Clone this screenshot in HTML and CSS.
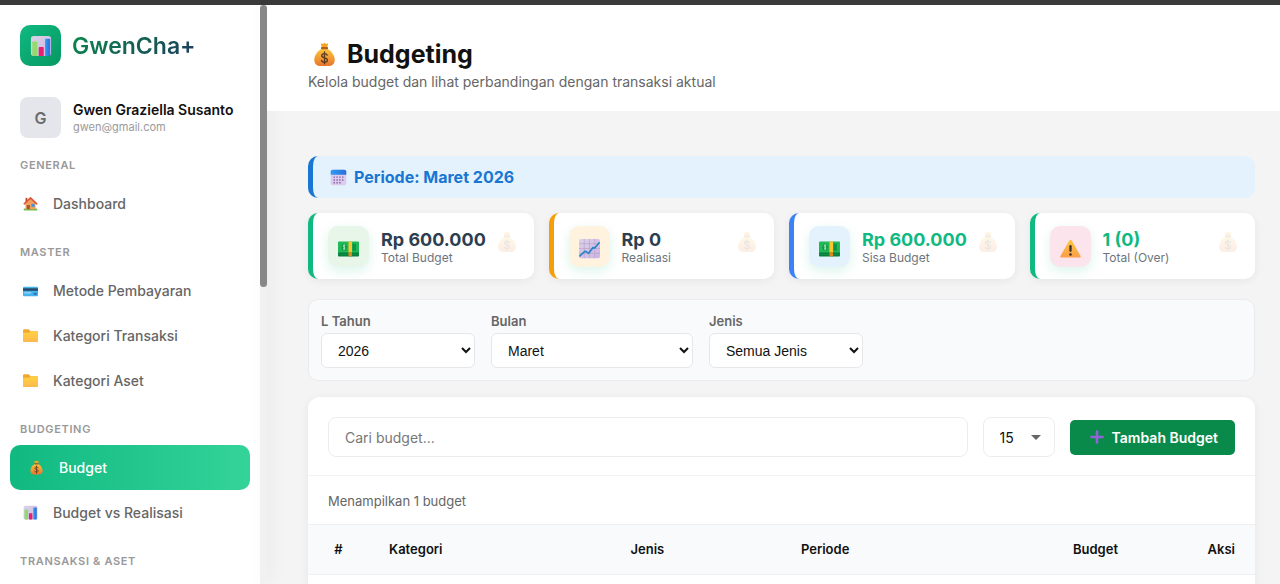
FILE: index.html
```html
<!DOCTYPE html>
<html lang="id">
  <head>
    <meta charset="UTF-8" />
    <meta name="viewport" content="width=device-width, initial-scale=1.0" />
    <title>Budgeting - GwenCha+</title>
    <link rel="stylesheet" href="styles.css" />
  </head>

  <body>
    <!-- Shared icons -->
    <svg class="sprite" aria-hidden="true">
      <defs>
        <linearGradient id="gBag" x1="0" y1="0" x2="0" y2="1">
          <stop offset="0" stop-color="#fbc63a" />
          <stop offset="1" stop-color="#e8762d" />
        </linearGradient>
        <linearGradient id="gFolder" x1="0" y1="0" x2="0" y2="1">
          <stop offset="0" stop-color="#ffd23f" />
          <stop offset="1" stop-color="#fdb851" />
        </linearGradient>
        <linearGradient id="gPaper" x1="0" y1="0" x2="1" y2="1">
          <stop offset="0" stop-color="#d9d3e6" />
          <stop offset="1" stop-color="#cfb4e4" />
        </linearGradient>
        <linearGradient id="gBlue" x1="0" y1="0" x2="1" y2="0">
          <stop offset="0" stop-color="#2f9cf2" />
          <stop offset="1" stop-color="#2a6fdc" />
        </linearGradient>
        <linearGradient id="gWarn" x1="0" y1="0" x2="0" y2="1">
          <stop offset="0" stop-color="#fdc53c" />
          <stop offset="1" stop-color="#fb9f4b" />
        </linearGradient>
      </defs>
      <symbol id="bag" viewBox="0 0 24 24">
        <path fill="#f5a623" d="M8.4 1.2l2 .8L12 .8l1.600 1.200 2-.8-1 4.300h-5.200z" />
        <path fill="url(#gBag)" d="M9.300 6.500h5.400c4 2.300 7.100 6.300 7.100 10.500 0 4.300-2.600 6-6.200 6H8.400c-3.600 0-6.200-1.700-6.200-6 0-4.200 3.100-8.200 7.100-10.500z" />
        <rect x="8.500" y="4.800" width="7" height="2.200" rx="1.100" fill="#a8612b" />
        <path fill="none" stroke="#5d3a26" stroke-width="1.300" stroke-linecap="round" d="M14.600 12.600c-.4-1-1.400-1.500-2.600-1.500-1.500 0-2.600.8-2.600 2 0 2.900 5.400 1.300 5.400 4.200 0 1.200-1.200 2.100-2.800 2.100-1.400 0-2.500-.6-2.900-1.700M12 9.600v11.300" />
      </symbol>
      <symbol id="chart" viewBox="0 0 24 24">
        <rect x="1" y="1" width="22" height="22" rx="3" fill="url(#gPaper)" />
        <rect x="2.500" y="7" width="5.500" height="16" rx="1" fill="#8fdc6b" />
        <rect x="9.500" y="13" width="5.500" height="10" rx="1" fill="#e0246f" />
        <rect x="16.500" y="4" width="5.500" height="19" rx="1" fill="url(#gBlue)" />
      </symbol>
      <symbol id="house" viewBox="0 0 24 24">
        <rect x="1" y="20" width="22" height="3" rx="1.500" fill="#6cbb46" />
        <rect x="4" y="3" width="3" height="7" fill="#b4533a" />
        <path fill="#f2a15c" d="M4 11l8-7 8 7v10H4z" />
        <path fill="#9a5a3c" d="M6 14.500h5V21H6z" />
        <path fill="#3f97e0" d="M13.500 12.500h5v5h-5z" />
        <path fill="none" stroke="#e0533d" stroke-width="2.600" stroke-linecap="round" stroke-linejoin="round" d="M2 12.500L12 3l10 9.500" />
      </symbol>
      <symbol id="card" viewBox="0 0 24 24">
        <rect x="0" y="6" width="24" height="15" rx="1.500" fill="#46b3ec" />
        <rect x="0" y="8.500" width="24" height="4" fill="#25496b" />
        <rect x="2" y="14.500" width="11" height="2.500" fill="#8fd2f5" />
        <rect x="17" y="15.500" width="5" height="3.500" rx="1" fill="#2778c9" />
      </symbol>
      <symbol id="folder" viewBox="0 0 24 24">
        <path fill="#f3a72c" d="M0 4.500C0 3 .8 2 2.300 2h6c.8 0 1.300.3 1.800.8L12 5h10c1.300 0 2 .7 2 2v8H0z" />
        <path fill="url(#gFolder)" d="M0 7.500h9.500l2.500-2h10c1.300 0 2 .7 2 2V21c0 1-.7 1.500-1.800 1.500H1.800C.7 22.500 0 22 0 21z" />
      </symbol>
      <symbol id="calendar" viewBox="0 0 24 24">
        <rect x="1" y="1" width="22" height="22" rx="3" fill="#dccbed" />
        <path fill="url(#gBlue)" d="M1 8V4c0-2 1-3 3-3h16c2 0 3 1 3 3v4z" />
        <path fill="none" stroke="#8468a5" stroke-width="2" stroke-dasharray="2 2" d="M5 11.500h14M5 15.500h14M5 19.500h12" />
      </symbol>
      <symbol id="money" viewBox="0 0 24 24">
        <rect x="0" y="4" width="24" height="13" rx="1" fill="#1fb956" />
        <path fill="#087c3c" d="M0 16.500h24V20c0 .6-.4 1-1 1H1c-.6 0-1-.4-1-1z" />
        <path stroke="#12994a" stroke-width=".8" d="M0 18.700h24" />
        <ellipse cx="7" cy="10.500" rx="3" ry="4" fill="#0e9446" />
        <path fill="none" stroke="#b8edbd" stroke-width="1" d="M8.300 8.700c-2-1.200-3.400 1-1.400 1.700 2.200.8.800 2.900-1.200 1.800M7 7v7" />
        <path fill="#0e9446" d="M16.500 6.500h4v8h-4z" />
        <path fill="#fbc52f" d="M12 4h4v12.500h-4z" />
        <path fill="#d98a1b" d="M12 16.500h4V21h-4z" />
      </symbol>
      <symbol id="trend" viewBox="0 0 24 24">
        <rect x="0" y="1" width="24" height="22" rx="2" fill="url(#gPaper)" />
        <path fill="none" stroke="#b79cc9" stroke-width=".7" d="M6 1v22M12 1v22M18 1v22M0 6.500h24M0 12h24M0 17.500h24" />
        <path fill="none" stroke="#2a86c8" stroke-width="2" stroke-linejoin="round" stroke-linecap="round" d="M1 20.500l6-5.500 4 2.500 5-6.500 2 .5 5-6" />
      </symbol>
      <symbol id="warning" viewBox="0 0 24 24">
        <path fill="url(#gWarn)" d="M10.800 2.700c.6-1 1.800-1 2.400 0l10.300 17.800c.5.900 0 1.800-1 1.800h-21c-1 0-1.500-.9-1-1.800z" />
        <rect x="10.700" y="8" width="2.600" height="8" rx="1.300" fill="#3a322c" />
        <circle cx="12" cy="18.800" r="1.500" fill="#3a322c" />
      </symbol>
      <symbol id="plus" viewBox="0 0 24 24">
        <path stroke="#9163d6" stroke-width="4.400" stroke-linecap="round" d="M12 2.500v19M2.500 12h19" />
      </symbol>
    </svg>

    <div class="topbar"></div>
    <div class="app">
      <aside class="sidebar">
        <div class="brand">
          <div class="brand-logo"><svg><use href="#chart" /></svg></div>
          <span class="brand-name">GwenCha+</span>
        </div>

        <div class="profile">
          <div class="avatar">G</div>
          <div>
            <div class="profile-name">Gwen Graziella Susanto</div>
            <div class="profile-email">gwen@gmail.com</div>
          </div>
        </div>

        <nav>
          <div class="nav-title">General</div>
          <a class="nav-link" href="#"><svg><use href="#house" /></svg>Dashboard</a>

          <div class="nav-title">Master</div>
          <a class="nav-link" href="#"><svg><use href="#card" /></svg>Metode Pembayaran</a>
          <a class="nav-link" href="#"><svg><use href="#folder" /></svg>Kategori Transaksi</a>
          <a class="nav-link" href="#"><svg><use href="#folder" /></svg>Kategori Aset</a>

          <div class="nav-title">Budgeting</div>
          <a class="nav-link active" href="#"><svg><use href="#bag" /></svg>Budget</a>
          <a class="nav-link" href="#"><svg><use href="#chart" /></svg>Budget vs Realisasi</a>

          <div class="nav-title">Transaksi &amp; Aset</div>
        </nav>
      </aside>
      <div class="scroll-track"><div class="scroll-thumb"></div></div>

      <main class="main">
        <header class="page-header">
          <h1><svg><use href="#bag" /></svg>Budgeting</h1>
          <p>Kelola budget dan lihat perbandingan dengan transaksi aktual</p>
        </header>

        <div class="content">
          <div class="period"><svg><use href="#calendar" /></svg>Periode: Maret 2026</div>

          <section class="stats">
            <div class="stat green">
              <div class="stat-icon"><svg><use href="#money" /></svg></div>
              <div class="stat-text">
                <div class="stat-value">Rp 600.000</div>
                <div class="stat-label">Total Budget</div>
              </div>
              <svg class="stat-mark"><use href="#bag" /></svg>
            </div>
            <div class="stat orange">
              <div class="stat-icon"><svg><use href="#trend" /></svg></div>
              <div class="stat-text">
                <div class="stat-value">Rp 0</div>
                <div class="stat-label">Realisasi</div>
              </div>
              <svg class="stat-mark"><use href="#bag" /></svg>
            </div>
            <div class="stat blue">
              <div class="stat-icon"><svg><use href="#money" /></svg></div>
              <div class="stat-text">
                <div class="stat-value positive">Rp 600.000</div>
                <div class="stat-label">Sisa Budget</div>
              </div>
              <svg class="stat-mark"><use href="#bag" /></svg>
            </div>
            <div class="stat pink">
              <div class="stat-icon"><svg><use href="#warning" /></svg></div>
              <div class="stat-text">
                <div class="stat-value positive">1 (0)</div>
                <div class="stat-label">Total (Over)</div>
              </div>
              <svg class="stat-mark"><use href="#bag" /></svg>
            </div>
          </section>

          <form class="filters">
            <div class="field">
              <label for="tahun">L Tahun</label>
              <select id="tahun">
                <option>2026</option>
              </select>
            </div>
            <div class="field field-wide">
              <label for="bulan">Bulan</label>
              <select id="bulan">
                <option>Maret</option>
              </select>
            </div>
            <div class="field">
              <label for="jenis">Jenis</label>
              <select id="jenis">
                <option>Semua Jenis</option>
              </select>
            </div>
          </form>

          <section class="panel">
            <div class="toolbar">
              <input class="search" type="text" placeholder="Cari budget..." aria-label="Cari budget" />
              <div class="per-page">
                <select aria-label="Jumlah per halaman">
                  <option>15</option>
                </select>
              </div>
              <button class="btn-add" type="button"><svg><use href="#plus" /></svg>Tambah Budget</button>
            </div>
            <p class="result-info">Menampilkan 1 budget</p>
            <table class="budget-table">
              <thead>
                <tr>
                  <th class="col-no">#</th>
                  <th class="col-kategori">Kategori</th>
                  <th class="col-jenis">Jenis</th>
                  <th>Periode</th>
                  <th class="num">Budget</th>
                  <th class="col-aksi num">Aksi</th>
                </tr>
              </thead>
            </table>
          </section>
        </div>
      </main>
    </div>
  </body>
</html>
```
FILE: styles.css
```css
* {
  box-sizing: border-box;
  margin: 0;
  padding: 0;
}

body {
  display: flex;
  flex-direction: column;
  height: 100vh;
  overflow: hidden;
  background: #f4f4f4;
  color: #111;
  font-family: Inter, "Liberation Sans", sans-serif;
  font-size: 14px;
}

svg {
  display: block;
  flex-shrink: 0;
}

.sprite {
  position: absolute;
  width: 0;
  height: 0;
}

.topbar {
  flex-shrink: 0;
  height: 5px;
  background: #3b3a3b;
}

.app {
  display: flex;
  flex: 1;
  min-height: 0;
}

/* Sidebar */
.sidebar {
  flex: 0 0 260px;
  overflow: hidden;
  background: #fff;
}

.scroll-track {
  flex: 0 0 7px;
  background: #f1f1f1;
  box-shadow: 4px 0 16px rgba(0, 0, 0, 0.06);
}

.scroll-thumb {
  height: 282px;
  border-radius: 4px;
  background: #888;
}

.brand,
.profile {
  display: flex;
  align-items: center;
  padding: 0 20px;
}

.brand {
  gap: 11px;
  margin-top: 20px;
}

.brand-logo {
  display: flex;
  align-items: center;
  justify-content: center;
  width: 41px;
  height: 41px;
  border-radius: 10px;
  background: linear-gradient(135deg, #10b981, #069862);
}

.brand-logo svg {
  width: 22px;
  height: 22px;
}

.brand-name {
  font-size: 23px;
  font-weight: 600;
  background: linear-gradient(135deg, #0a8a4a, #1e3a5f);
  -webkit-background-clip: text;
  background-clip: text;
  color: transparent;
}

.profile {
  gap: 12px;
  margin: 31px 0 19px;
}

.avatar {
  display: flex;
  align-items: center;
  justify-content: center;
  width: 41px;
  height: 41px;
  border-radius: 8px;
  background: #e5e6eb;
  color: #6b6b6b;
  font-size: 16px;
  font-weight: 600;
}

.profile-name {
  font-size: 14px;
  font-weight: 600;
  line-height: 18px;
}

.profile-email {
  color: #9a9a9a;
  font-size: 11px;
  line-height: 16px;
}

.nav-title {
  padding: 18px 20px 8px;
  color: #999;
  font-size: 11px;
  font-weight: 600;
  line-height: 16px;
  letter-spacing: 0.06em;
  text-transform: uppercase;
}

.nav-title:first-child {
  padding-top: 0;
}

.nav-link {
  display: flex;
  align-items: center;
  gap: 12px;
  height: 45px;
  padding: 0 20px;
  color: #666;
  font-size: 14px;
  font-weight: 500;
  text-decoration: none;
}

.nav-link svg {
  width: 21px;
  height: 15px;
}

.nav-link.active {
  margin: 0 10px;
  padding: 0 16px;
  border-radius: 10px;
  background: linear-gradient(90deg, #10b981, #34d399);
  color: #fff;
}

/* Page */
.main {
  display: flex;
  flex: 1;
  flex-direction: column;
  min-width: 0;
}

.page-header {
  padding: 32px 41px 18px;
  background: #fff;
}

.page-header h1 {
  display: flex;
  align-items: center;
  gap: 10px;
  font-size: 25px;
  font-weight: 700;
  line-height: 34px;
}

.page-header h1 svg {
  width: 25px;
  height: 25px;
  margin-left: 4px;
}

.page-header p {
  color: #666;
  font-size: 14px;
  line-height: 22px;
}

.content {
  display: flex;
  flex: 1;
  flex-direction: column;
  min-height: 0;
  padding: 45px 25px 0 41px;
}

.period {
  display: flex;
  align-items: center;
  gap: 7px;
  height: 42px;
  padding-left: 17px;
  border-left: 5px solid #1976d2;
  border-radius: 10px;
  background: #e3f2fd;
  color: #1976d2;
  font-size: 16px;
  font-weight: 700;
}

.period svg {
  width: 17px;
  height: 17px;
}

.stats {
  display: grid;
  grid-template-columns: repeat(4, 1fr);
  gap: 15px;
  margin-top: 15px;
}

.stat {
  position: relative;
  display: flex;
  align-items: center;
  gap: 12px;
  height: 66px;
  padding: 0 15px;
  border-left: 5px solid #10b981;
  border-radius: 10px;
  background: #fff;
  box-shadow: 0 2px 8px rgba(0, 0, 0, 0.06);
}

.stat-icon {
  display: flex;
  flex-shrink: 0;
  align-items: center;
  justify-content: center;
  width: 41px;
  height: 41px;
  padding-top: 4px;
  border-radius: 10px;
  background: #e8f5e9;
  box-shadow: 0 4px 12px rgba(16, 185, 129, 0.15);
}

.stat-icon svg {
  width: 21px;
  height: 21px;
}

.stat.orange {
  border-color: #f59e0b;
}

.stat.orange .stat-icon {
  background: #fff3e0;
}

.stat.blue {
  border-color: #3b82f6;
}

.stat.blue .stat-icon {
  background: #e3f2fd;
}

.stat.pink .stat-icon {
  background: #fce4ec;
}

.stat-text {
  padding-top: 4px;
  white-space: nowrap;
}

.stat-value {
  color: #2c3e50;
  font-size: 18px;
  font-weight: 700;
  line-height: 20px;
}

.stat-value.positive {
  color: #10b981;
}

.stat-label {
  color: #6c757d;
  font-size: 12px;
  line-height: 16px;
}

/* faded bag in the card corner */
.stat-mark {
  position: absolute;
  top: 18px;
  right: 16px;
  width: 22px;
  height: 22px;
  opacity: 0.12;
}

.filters {
  display: flex;
  gap: 16px;
  margin-top: 20px;
  padding: 12px;
  border: 1px solid #ebebee;
  border-radius: 10px;
  background: #f8fafc;
}

.field {
  display: flex;
  flex: 0 0 154px;
  flex-direction: column;
  gap: 3px;
}

.field-wide {
  flex-basis: 202px;
}

.field label {
  color: #666;
  font-size: 13px;
  font-weight: 600;
  line-height: 18px;
}

.field select {
  height: 35px;
  padding-left: 12px;
  border: 1px solid #e5e7eb;
  border-radius: 6px;
  background: #fff;
  color: #111;
  font-family: "Liberation Sans", Arial, sans-serif;
  font-size: 14px;
}

/* Budget list */
.panel {
  flex: 1;
  margin-top: 16px;
  border-radius: 12px 12px 0 0;
  background: #fff;
  box-shadow: 0 2px 10px rgba(0, 0, 0, 0.06);
}

.toolbar {
  display: flex;
  align-items: center;
  gap: 15px;
  padding: 20px 20px 18px;
  border-bottom: 1px solid #f3f3f5;
}

.search,
.per-page select {
  height: 40px;
  padding: 0 16px;
  border: 1px solid #ededf0;
  border-radius: 8px;
  background: #fff;
  color: #111;
  font-family: inherit;
  font-size: 14px;
}

.search {
  flex: 1;
  min-width: 0;
}

.search::placeholder {
  color: #777;
}

.per-page {
  position: relative;
}

.per-page select {
  width: 72px;
  appearance: none;
}

.per-page::after {
  content: "";
  position: absolute;
  top: 18px;
  right: 14px;
  border: 5px solid transparent;
  border-top-color: #666;
  border-bottom: 0;
  pointer-events: none;
}

.btn-add {
  display: flex;
  align-items: center;
  gap: 8px;
  height: 35px;
  padding: 0 17px 0 20px;
  border: none;
  border-radius: 5px;
  background: #0a8a4a;
  color: #fff;
  font-family: inherit;
  font-size: 14px;
  font-weight: 600;
  cursor: pointer;
}

.btn-add svg {
  width: 14px;
  height: 14px;
}

.result-info {
  padding: 15px 20px 13px;
  color: #666;
  font-size: 13px;
  line-height: 20px;
}

.budget-table {
  width: 100%;
  table-layout: fixed;
  border-collapse: collapse;
}

.budget-table th {
  height: 50px;
  padding: 0 20px 2px;
  border-top: 1px solid #eef0f3;
  border-bottom: 1px solid #eef0f3;
  background: #f8fafc;
  font-size: 13px;
  font-weight: 600;
  text-align: left;
}

.budget-table .col-no {
  width: 61px;
  text-align: center;
}

.budget-table .col-kategori {
  width: 25.5%;
}

.budget-table .col-jenis {
  width: 18%;
}

.budget-table .col-aksi {
  width: 117px;
}

.budget-table .num {
  text-align: right;
}
```
